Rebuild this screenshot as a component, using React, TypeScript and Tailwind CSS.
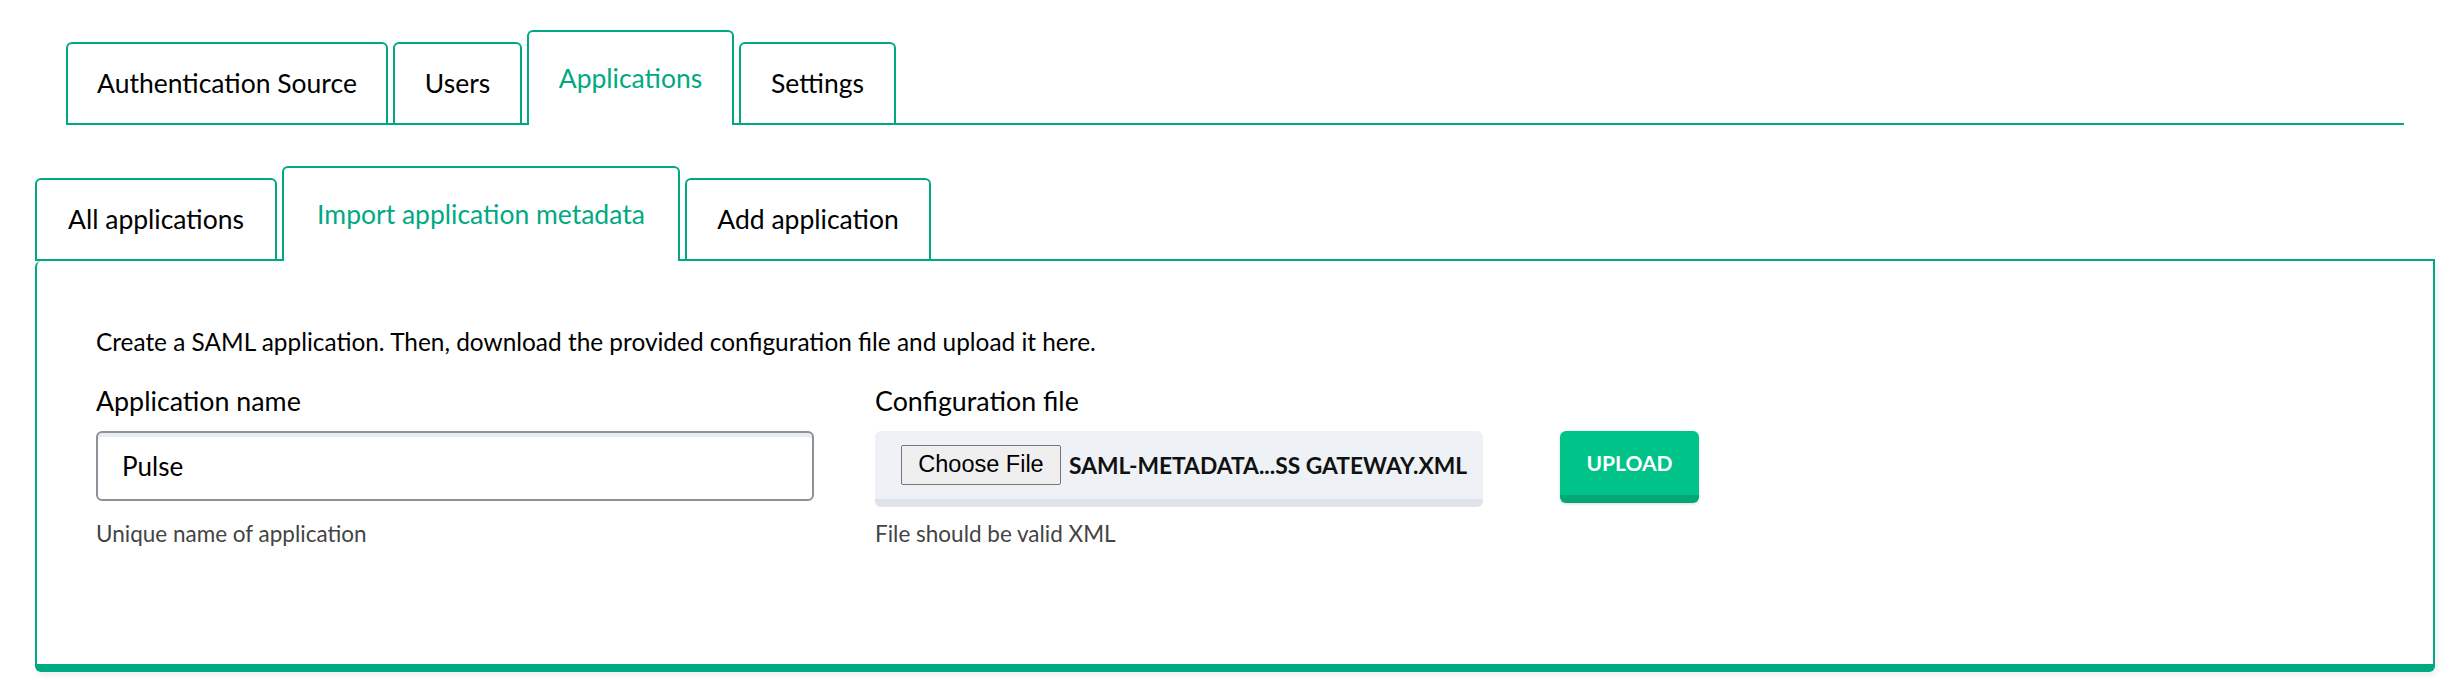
import React, { useState } from 'react';

const topTabs = [
    { label: 'Authentication Source', width: 'w-[322px]' },
    { label: 'Users', width: 'w-[129px]' },
    { label: 'Applications', width: 'w-[207px]' },
    { label: 'Settings', width: 'w-[157px]' },
];

const subTabs = [
    { label: 'All applications', width: 'w-[242px]' },
    { label: 'Import application metadata', width: 'w-[398px]' },
    { label: 'Add application', width: 'w-[246px]' },
];

// -- Tab --
// Inactive tabs sit on the row's bottom line, the active one is taller and open at the bottom.
const Tab: React.FC<{ label: string; width: string; active: boolean; onClick: () => void }> = ({ label, width, active, onClick }) => (
    <button
        onClick={onClick}
        className={
            active
                ? `${width} h-[95px] -mb-[2px] flex items-center justify-center whitespace-nowrap rounded-t-[6px] border-2 border-b-0 border-[#01a982] bg-white text-[#01a982] text-[26.5px]`
                : `${width} h-[83px] -mb-[2px] flex items-center justify-center whitespace-nowrap rounded-t-[6px] border-2 border-[#01a982] bg-white text-black text-[26.5px]`
        }
    >
        {label}
    </button>
);

export default function App() {
    const [topTab, setTopTab] = useState('Applications');
    const [subTab, setSubTab] = useState('Import application metadata');
    const [name, setName] = useState('Pulse');

    return (
        <div className="min-h-[696px] bg-white pt-[30px] pl-[35px] pr-[17px]" style={{ fontFamily: 'Lato, "Open Sans", sans-serif' }}>
            {/* -- Top navigation -- */}
            <div className="ml-[31px] mr-[31px] flex items-end gap-[5px] border-b-2 border-[#01a982]">
                {topTabs.map(t => (
                    <Tab key={t.label} label={t.label} width={t.width} active={topTab === t.label} onClick={() => setTopTab(t.label)} />
                ))}
            </div>

            {/* -- Sub navigation -- */}
            <div className="mt-[41px] flex items-end gap-[5px] border-b-2 border-[#01a982]">
                {subTabs.map(t => (
                    <Tab key={t.label} label={t.label} width={t.width} active={subTab === t.label} onClick={() => setSubTab(t.label)} />
                ))}
            </div>

            {/* -- Import panel -- */}
            <div className="h-[411px] rounded-b-[6px] rounded-tl-[6px] border-x-2 border-b-[8px] border-[#01a982] pl-[59px] pt-[63px] shadow-[2px_3px_6px_rgba(0,0,0,0.08)]">
                <p className="text-[24.4px] leading-[36px] text-black">
                    Create a SAML application. Then, download the provided configuration file and upload it here.
                </p>

                <div className="mt-[23px] flex items-start">
                    <div className="w-[718px]">
                        <label className="block text-[26.8px] leading-[36px] text-black">Application name</label>
                        <input
                            value={name}
                            onChange={e => setName(e.target.value)}
                            className="mt-[12px] h-[70px] w-full rounded-[6px] border-2 border-[#8c9299] px-[24px] text-[26px] text-black shadow-[inset_0_4px_0_#e9ecef] outline-none"
                        />
                        <div className="mt-[18px] text-[22.5px] leading-[30px] text-[#444]">Unique name of application</div>
                    </div>

                    <div className="ml-[61px] w-[608px]">
                        <label className="block text-[26.8px] leading-[36px] text-black">Configuration file</label>
                        <div className="mt-[12px] flex h-[76px] items-center rounded-[6px] border-b-[8px] border-[#dfe4ea] bg-[#eef1f5] pl-[26px]">
                            <button
                                className="h-[40px] w-[160px] rounded-[2px] border border-[#767676] bg-[#efefef] text-[23.5px] text-black"
                                style={{ fontFamily: '"Liberation Sans", Arial, sans-serif' }}
                            >
                                Choose File
                            </button>
                            <span className="ml-[8px] whitespace-nowrap text-[22.8px] font-bold uppercase text-[#111]">SAML-METADATA...SS GATEWAY.XML</span>
                        </div>
                        <div className="mt-[12px] text-[22.5px] leading-[30px] text-[#444]">File should be valid XML</div>
                    </div>

                    <button className="ml-[77px] mt-[48px] h-[72px] w-[139px] rounded-[6px] border-b-[8px] border-[#00a878] bg-[#00c389] text-[21px] font-bold text-white shadow-[0_1px_3px_rgba(0,0,0,0.15)]">
                        UPLOAD
                    </button>
                </div>
            </div>
        </div>
    );
}
